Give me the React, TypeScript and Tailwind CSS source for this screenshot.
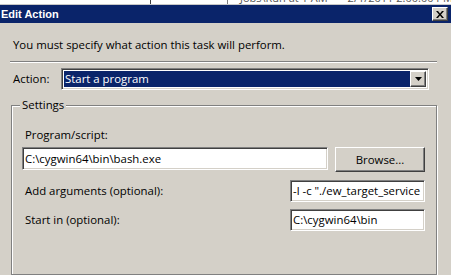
import React from "react";

const ui = { fontFamily: '"Open Sans", "Liberation Sans", sans-serif' };

function Sunken({ className, children }: { className: string; children?: React.ReactNode }) {
  return (
    <div
      className={`flex items-center overflow-hidden whitespace-nowrap border border-[#808080] border-r-white border-b-white bg-white pl-[2px] text-[11.4px] text-black shadow-[inset_1px_1px_0_#404040,inset_-1px_-1px_0_#d4d0c8] ${className}`}
    >
      {children}
    </div>
  );
}

export default function App() {
  return (
    <div className="flex h-[275px] w-[451px] flex-col overflow-hidden bg-[#d4d0c8] text-black" style={ui}>
      {/* background window peeking above */}
      <div className="relative h-[5px] overflow-hidden border-b border-[#c8c8c8] bg-white">
        <div className="absolute left-[150px] top-0 h-[4px] w-px bg-[#404040]" />
        <div className="absolute left-[227px] top-0 h-[4px] w-px bg-[#808080]" />
        <p className="absolute left-[240px] top-[-10px] whitespace-nowrap text-[11px] text-[#555]">
          Jobs\Run at 1 AM&nbsp;&nbsp;&nbsp;&nbsp;&nbsp;&nbsp;&nbsp;2/1/2011 2:00:00 PM
        </p>
      </div>

      {/* title bar */}
      <div className="flex h-[18px] items-center justify-between bg-[#0a246a]">
        <span
          className="pl-px text-[11px] font-bold text-white"
          style={{ fontFamily: '"Liberation Sans", sans-serif' }}
        >
          Edit Action
        </span>
        <button className="mr-[3px] flex h-[14px] w-[16px] items-center justify-center border border-white border-r-[#404040] border-b-[#404040] bg-[#d4d0c8] shadow-[inset_-1px_-1px_0_#808080]">
          <svg width="8" height="7" viewBox="0 0 8 7">
            <path d="M0 0h2l2 2.5L6 0h2L5 3.5 8 7H6L4 4.5 2 7H0l3-3.5z" fill="#000" />
          </svg>
        </button>
      </div>

      <p className="mt-[14px] pl-[13px] text-[11.4px] leading-[15px]">
        You must specify what action this task will perform.
      </p>

      <div className="ml-[10px] mt-[9px] w-[427px] border-t border-b border-t-[#808080] border-b-white" />

      {/* action dropdown */}
      <div className="mt-[5px] flex items-center">
        <span className="w-[61px] pl-[13px] text-[11.4px]">Action:</span>
        <div className="flex h-[22px] w-[368px] border border-[#808080] border-r-white border-b-white bg-white p-[2px] shadow-[inset_1px_1px_0_#404040,inset_-1px_-1px_0_#d4d0c8]">
          <div className="flex flex-1 items-center bg-[#0a246a] pl-[1px] text-[11.4px] text-white">Start a program</div>
          <div className="flex w-[16px] items-center justify-center border border-white border-r-[#404040] border-b-[#404040] bg-[#d4d0c8] shadow-[inset_-1px_-1px_0_#808080]">
            <svg width="7" height="4" viewBox="0 0 7 4">
              <path d="M0 0h7L3.5 4z" fill="#000" />
            </svg>
          </div>
        </div>
      </div>

      {/* settings group */}
      <div className="relative ml-[11px] mt-[15px] w-[426px] flex-1 border border-[#808080] shadow-[inset_1px_1px_0_#fff,1px_1px_0_#fff]">
        <span className="absolute left-[8px] top-[-9px] bg-[#d4d0c8] px-[2px] text-[11.4px] leading-[15px]">Settings</span>

        <p className="ml-[13px] mt-[21px] text-[11.4px] leading-[15px]">Program/script:</p>
        <div className="ml-[10px] mt-[5px] flex items-start gap-[7px]">
          <Sunken className="h-[23px] w-[306px]">C:\cygwin64\bin\bash.exe</Sunken>
          <button className="flex h-[25px] w-[90px] items-center justify-center border border-white border-r-[#404040] border-b-[#404040] bg-[#d4d0c8] text-[11.4px] shadow-[inset_-1px_-1px_0_#808080]">
            Browse...
          </button>
        </div>

        <div className="mt-[8px] flex items-center">
          <span className="w-[278px] pl-[13px] text-[11.4px]">Add arguments (optional):</span>
          <Sunken className="h-[22px] w-[135px]">-l -c "./ew_target_service</Sunken>
        </div>

        <div className="mt-[7px] flex items-center">
          <span className="w-[278px] pl-[13px] text-[11.4px]">Start in (optional):</span>
          <Sunken className="h-[22px] w-[135px]">C:\cygwin64\bin</Sunken>
        </div>
      </div>
    </div>
  );
}
